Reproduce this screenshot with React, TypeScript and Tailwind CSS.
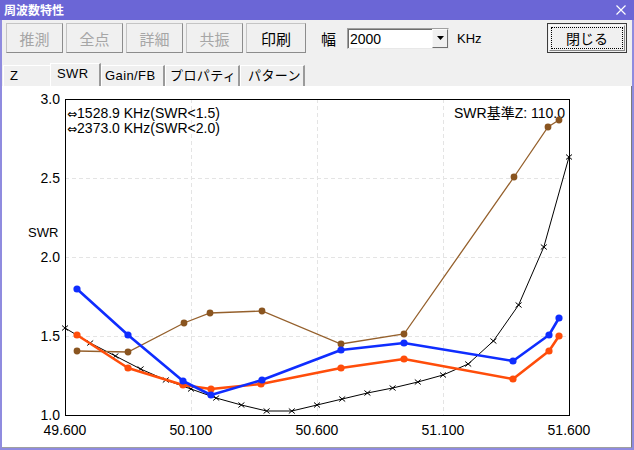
import React from "react";

/* ========= CHART DATA (pixel coords in page space) ========= */
const blue: number[][] = [
  [77, 289], [128, 335], [183, 381], [211, 395], [262, 380],
  [341, 350], [404, 343], [513, 361], [549, 335], [559, 318],
];
const orange: number[][] = [
  [77, 335], [128, 368], [183, 385], [211, 389], [261, 384],
  [341, 368], [404, 359], [513, 379], [549, 351], [559, 336],
];
const brown: number[][] = [
  [77, 351], [128, 352], [184, 323], [210, 313], [262, 311],
  [341, 344], [404, 334], [514, 177], [548, 127], [559, 120],
];
const blackY = [328, 343, 356, 369, 380, 389, 398, 405, 411, 411, 405, 399, 393, 388, 382, 375, 364, 341, 305, 247, 157];
const black = blackY.map((y, i) => [65 + 25.2 * i, y]);

const pts = (a: number[][]) => a.map((p) => p.join(",")).join(" ");

const yTicks = [
  { label: "3.0", y: 99 },
  { label: "2.5", y: 178 },
  { label: "2.0", y: 257 },
  { label: "1.5", y: 336 },
  { label: "1.0", y: 415 },
];
const xTicks = [
  { label: "49.600", x: 65 },
  { label: "50.100", x: 191 },
  { label: "50.600", x: 317 },
  { label: "51.100", x: 443 },
  { label: "51.600", x: 569 },
];

const tabs = [
  { name: "Z", w: "w-[47px]", pl: "pl-[6px]", active: false, edge: false },
  { name: "SWR", w: "w-[51px]", pl: "pl-[6px]", active: true, edge: true },
  { name: "Gain/FB", w: "w-[64px]", pl: "pl-[3px]", active: false, edge: true },
  { name: "プロパティ", w: "w-[75px]", pl: "pl-[4px]", active: false, edge: true },
  { name: "パターン", w: "w-[65px]", pl: "pl-[7px]", active: false, edge: true },
];

const FONT = "Liberation Sans, Noto Sans CJK JP, sans-serif";

function ToolButton({ label, disabled, wide }: { label: string; disabled?: boolean; wide?: boolean }) {
  return (
    <div
      className={`${wide ? "w-[60px]" : "w-[57px]"} h-[30px] shrink-0 flex items-center justify-center
        border border-[#c4c4c4] border-b-[#8c8c8c] border-r-[#8c8c8c] bg-[#f0f0f0]
        text-[15px] font-['Noto_Sans_CJK_JP',sans-serif] leading-none
        ${disabled ? "text-[#a6a6a6]" : "text-black"}`}
    >
      {label}
    </div>
  );
}

function Chart() {
  return (
    <svg width={629} height={361} viewBox="2 86 629 361" className="block" fontFamily={FONT}>
      {/* grid */}
      {[178, 257, 336].map((y) => (
        <line key={y} x1={65} y1={y + 0.5} x2={569} y2={y + 0.5} stroke="#e4e4e4" strokeDasharray="4 3" />
      ))}
      {[191, 317, 443].map((x) => (
        <line key={x} x1={x + 0.5} y1={99} x2={x + 0.5} y2={415} stroke="#e4e4e4" strokeDasharray="4 3" />
      ))}

      {/* frame */}
      <rect x={65.5} y={99.5} width={504} height={316} fill="none" stroke="#000" />

      {/* tick labels */}
      {yTicks.map((t) => (
        <text key={t.label} x={60} y={t.y + 5} fontSize={14} textAnchor="end" fill="#000">
          {t.label}
        </text>
      ))}
      {xTicks.map((t) => (
        <text key={t.label} x={t.x} y={435} fontSize={14} textAnchor="middle" fill="#000">
          {t.label}
        </text>
      ))}
      <text x={28} y={237} fontSize={13} fill="#000">SWR</text>

      {/* annotations */}
      <text x={67} y={118} fontSize={14} fill="#000">
        <tspan fontFamily="DejaVu Sans, sans-serif" fontSize={12}>⇔</tspan>1528.9 KHz(SWR&lt;1.5)
      </text>
      <text x={67} y={133} fontSize={14} fill="#000">
        <tspan fontFamily="DejaVu Sans, sans-serif" fontSize={12}>⇔</tspan>2373.0 KHz(SWR&lt;2.0)
      </text>
      <text x={565} y={118} fontSize={14} textAnchor="end" fill="#000">SWR基準Z: 110.0</text>

      {/* black curve with x markers */}
      <polyline points={pts(black)} fill="none" stroke="#000" strokeWidth={1} />
      {black.map(([x, y], i) => (
        <path key={i} d={`M${x - 3} ${y - 2.5}L${x + 3} ${y + 2.5}M${x - 3} ${y + 2.5}L${x + 3} ${y - 2.5}`} stroke="#000" strokeWidth={1} />
      ))}

      {/* brown */}
      <polyline points={pts(brown)} fill="none" stroke="#95602c" strokeWidth={1.3} />
      {brown.map(([x, y], i) => (
        <circle key={i} cx={x} cy={y} r={3.4} fill="#8a5520" />
      ))}

      {/* orange */}
      <polyline points={pts(orange)} fill="none" stroke="#ff4d0a" strokeWidth={2.6} strokeLinejoin="round" />
      {orange.map(([x, y], i) => (
        <circle key={i} cx={x} cy={y} r={3.6} fill="#ff4d0a" />
      ))}

      {/* blue */}
      <polyline points={pts(blue)} fill="none" stroke="#0f2dff" strokeWidth={2.6} strokeLinejoin="round" />
      {blue.map(([x, y], i) => (
        <circle key={i} cx={x} cy={y} r={3.6} fill="#0f2dff" />
      ))}
    </svg>
  );
}

export default function App() {
  return (
    <div className="w-[634px] h-[450px] flex flex-col bg-[#f0f0f0] font-['Liberation_Sans','Noto_Sans_CJK_JP',sans-serif] text-black select-none overflow-hidden">
      {/* TITLE BAR */}
      <div className="h-[20px] shrink-0 bg-[#6b66d6] flex items-center justify-between pl-[4px] pr-[8px]">
        <span className="text-white text-[12px] font-bold font-['Noto_Sans_CJK_JP',sans-serif] leading-none">
          周波数特性
        </span>
        <svg width="10" height="10" viewBox="0 0 10 10">
          <path d="M0.5 0.5L9.5 9.5M9.5 0.5L0.5 9.5" stroke="#fff" strokeWidth={1.2} />
        </svg>
      </div>

      {/* BODY */}
      <div className="flex-1 flex flex-col border-x-2 border-b-2 border-[#8f8bdf] min-h-0">
        {/* TOOLBAR */}
        <div className="h-[42px] shrink-0 pt-[3px] pl-[4px] pr-[5px]">
          <div className="h-[30px] flex items-center">
            <div className="flex gap-[3px]">
              <ToolButton label="推測" disabled />
              <ToolButton label="全点" disabled />
              <ToolButton label="詳細" disabled />
              <ToolButton label="共振" disabled />
              <ToolButton label="印刷" wide />
            </div>

            <span className="ml-[15px] text-[15px] leading-none font-['Noto_Sans_CJK_JP',sans-serif]">幅</span>

            {/* combo */}
            <div className="ml-[11px] w-[102px] h-[21px] flex border border-[#a0a0a0] border-b-[#e8e8e8] border-r-[#e8e8e8] bg-white">
              <div className="flex-1 flex items-center pl-[1px] text-[14px] leading-none border-t border-l border-[#6e6e6e]">
                2000
              </div>
              <div className="w-[16px] h-full flex items-center justify-center bg-[#f0f0f0] border border-[#fafafa] border-b-[#707070] border-r-[#707070]">
                <svg width="7" height="4" viewBox="0 0 7 4">
                  <path d="M0 0H7L3.5 4Z" fill="#000" />
                </svg>
              </div>
            </div>

            <span className="ml-[8px] text-[13px] leading-none">KHz</span>

            <div className="ml-auto w-[80px] h-[30px] border border-[#3c3c3c] bg-[#f0f0f0] p-[1px]">
              <div className="w-full h-full border border-[#fafafa] border-b-[#8a8a8a] border-r-[#8a8a8a] p-[1px]">
                <div className="w-full h-full border border-dotted border-black flex items-center justify-center text-[14px] leading-none font-['Noto_Sans_CJK_JP',sans-serif]">
                  閉じる
                </div>
              </div>
            </div>
          </div>
        </div>

        {/* TABS */}
        <div className="h-[24px] shrink-0 flex items-end pl-[1px]">
          {tabs.map((t) => (
            <div
              key={t.name}
              className={`${t.w} ${t.pl} ${t.active ? "h-[23px]" : "h-[21px]"} shrink-0 pt-[2px]
                border-t border-l border-white ${t.edge ? "border-r-2 border-r-[#9a9a9a]" : ""}
                text-[13px] tracking-[0.4px] leading-[15px] whitespace-nowrap`}
            >
              {t.name}
            </div>
          ))}
        </div>

        {/* PANEL */}
        <div className="flex-1 min-h-0 bg-white border-r border-r-[#7a7a7a] border-b border-b-[#a0a0a0] overflow-hidden">
          <Chart />
        </div>
      </div>
    </div>
  );
}
